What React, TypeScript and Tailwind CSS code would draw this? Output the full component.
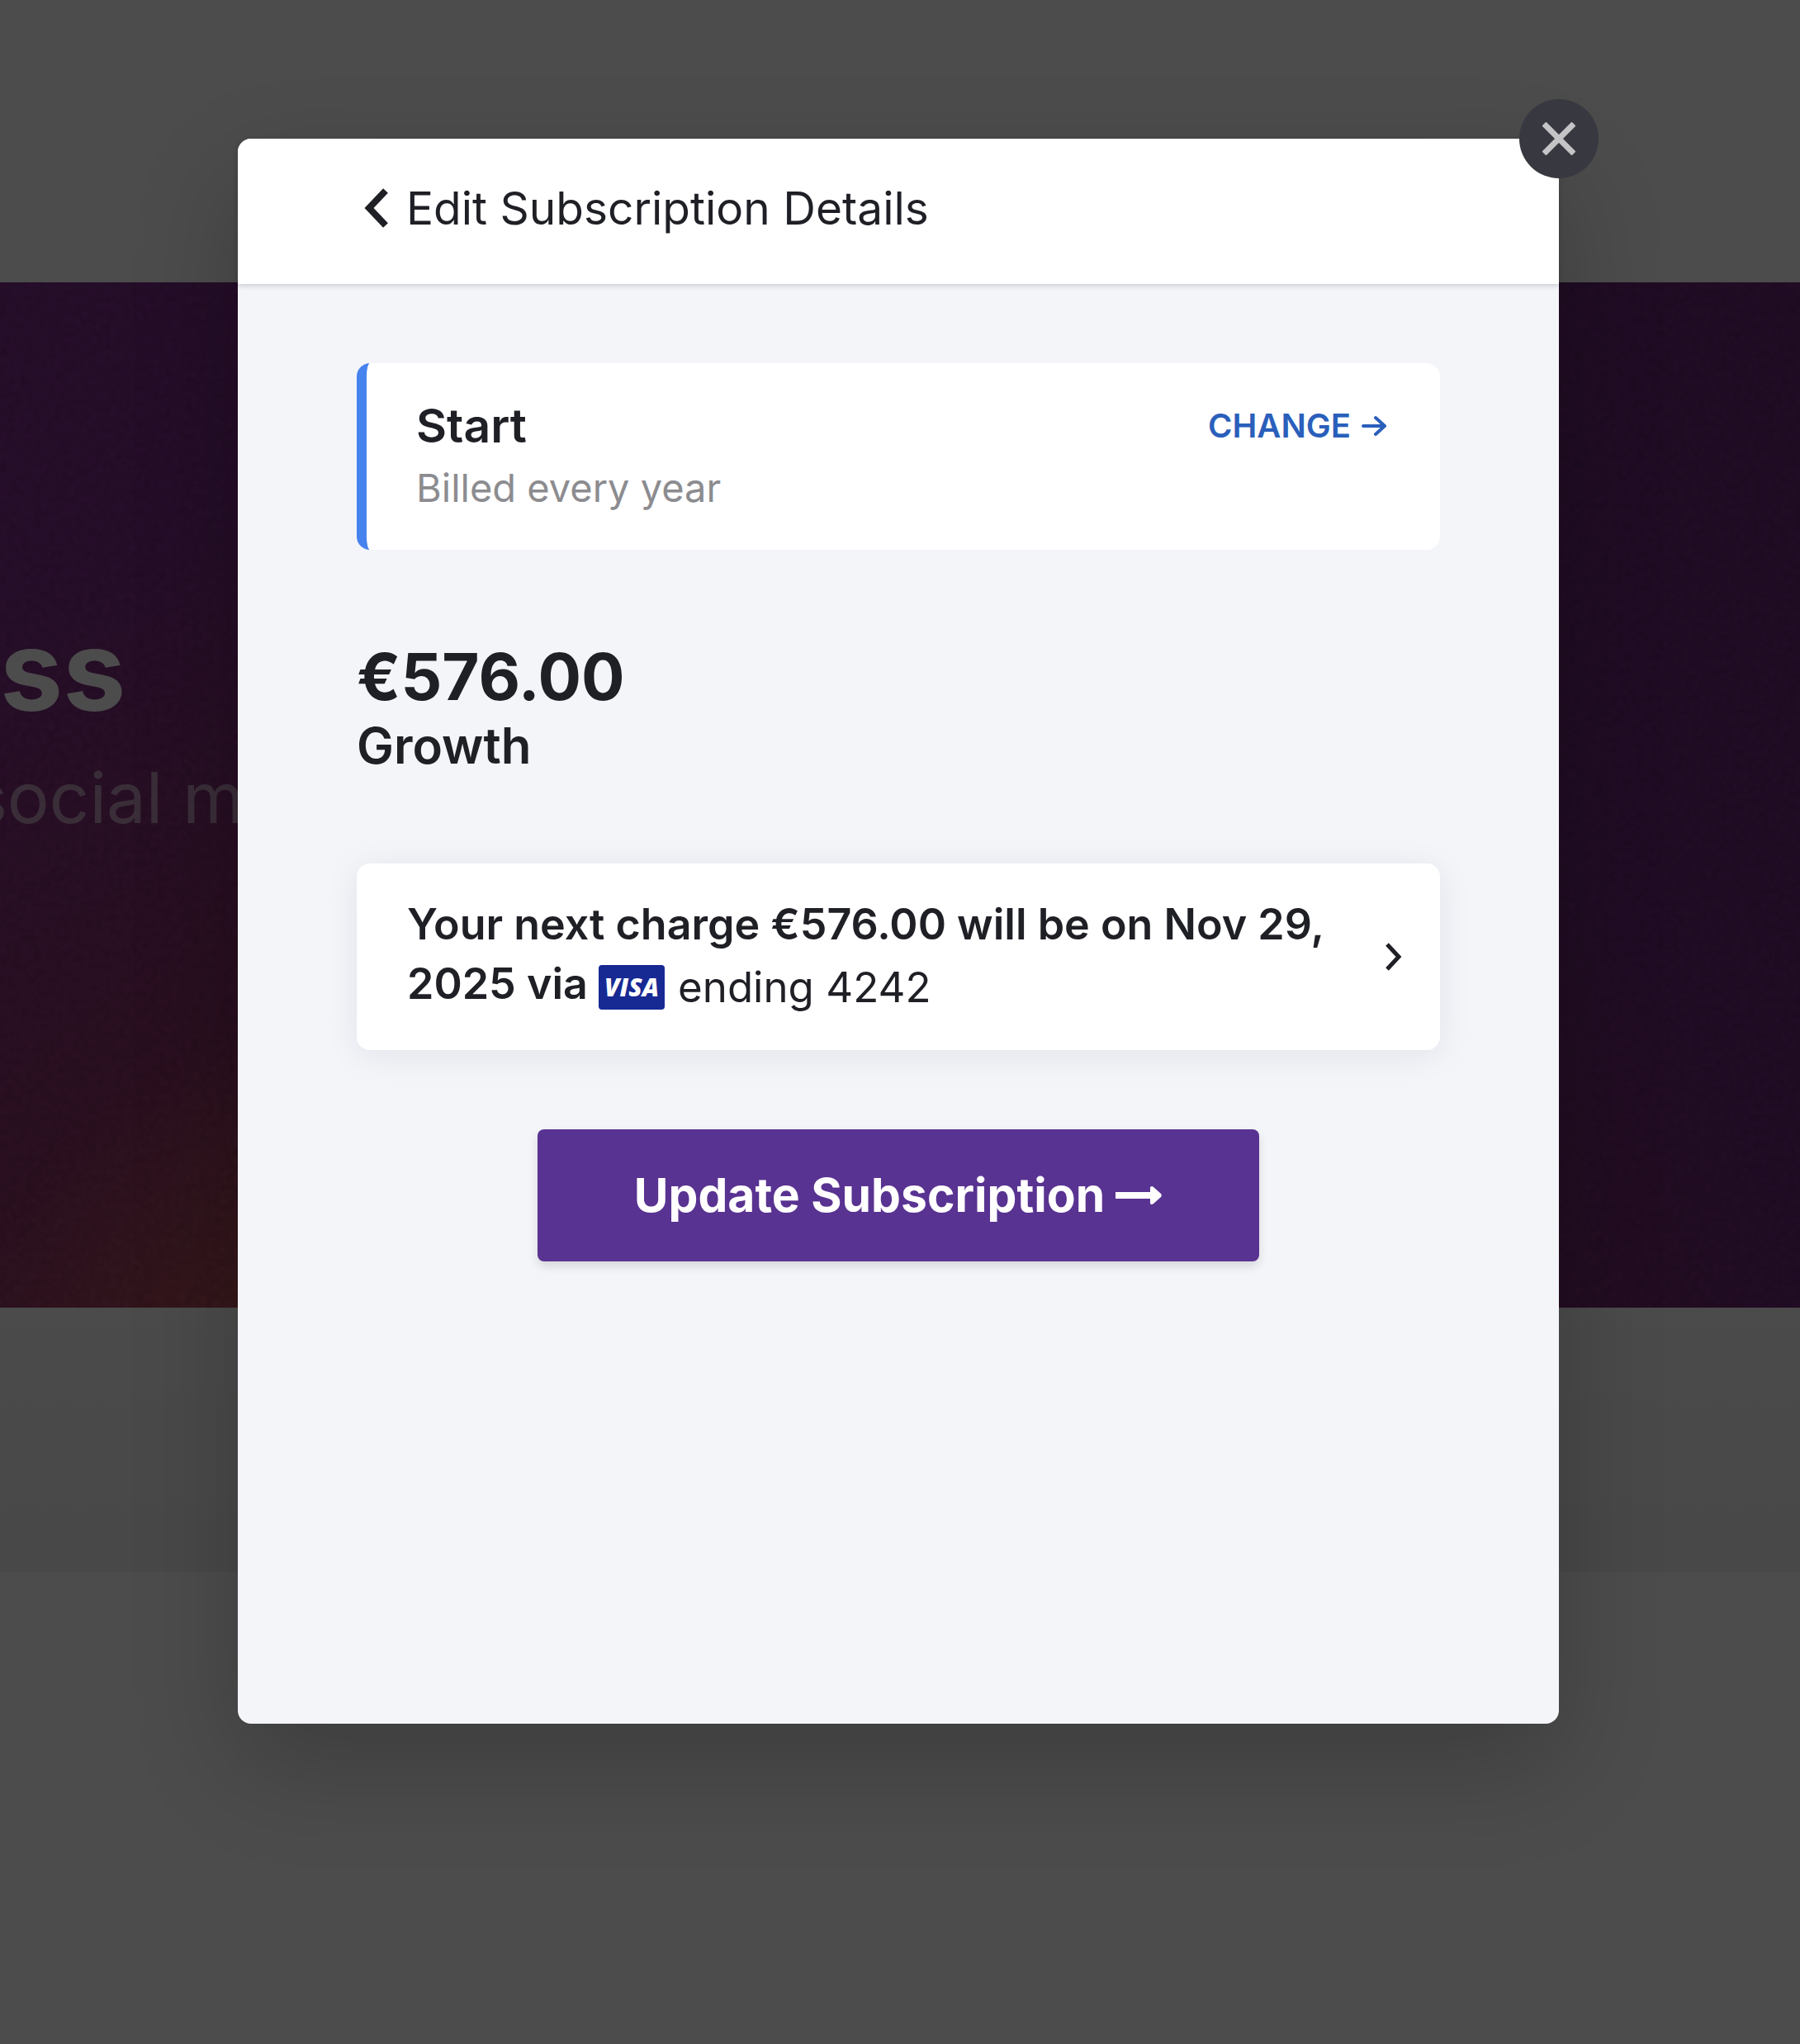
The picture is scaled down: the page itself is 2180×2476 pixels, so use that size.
import type { ReactNode } from 'react';

interface Plan {
  name: string;
  interval: string;
}

interface Charge {
  amount: string;
  product: string;
  date: string;
  last4: string;
}

const plan: Plan = { name: 'Start', interval: 'Billed every year' };
const charge: Charge = { amount: '€576.00', product: 'Growth', date: 'Nov 29, 2025', last4: '4242' };

function BackIcon() {
  return (
    <svg viewBox="0 0 48 48" className="size-12" fill="none" stroke="currentColor" strokeWidth="8" aria-hidden="true">
      <path d="M35 3 15 24l20 21" />
    </svg>
  );
}

function CloseIcon() {
  return (
    <svg viewBox="0 0 40 40" className="size-10" fill="none" stroke="currentColor" strokeWidth="7" aria-hidden="true">
      <path d="M2 2l36 36M38 2 2 38" />
    </svg>
  );
}

function ArrowIcon() {
  return (
    <svg
      viewBox="0 0 32 32"
      className="size-8"
      fill="none"
      stroke="currentColor"
      strokeWidth="4"
      strokeLinecap="round"
      strokeLinejoin="round"
      aria-hidden="true"
    >
      <path d="M3 16h26M18 6l11 10-11 10" />
    </svg>
  );
}

function ChevronIcon() {
  return (
    <svg viewBox="0 0 20 36" className="h-9 w-5 shrink-0" fill="none" stroke="currentColor" strokeWidth="5" aria-hidden="true">
      <path d="M2 3l14 15L2 33" />
    </svg>
  );
}

function LongArrowIcon() {
  return (
    <svg viewBox="0 0 58 24" className="h-6 w-[58px]" fill="currentColor" aria-hidden="true">
      <path d="M1 8h42V3c0-2 2-3 4-1l9 8c1 1 1 3 0 4l-9 8c-2 2-4 1-4-1v-5H1z" />
    </svg>
  );
}

function VisaBadge() {
  return (
    <span className="flex h-[54px] w-20 items-center justify-center rounded-sm bg-[#172993] font-['Open_Sans',sans-serif] text-[30px] leading-none font-extrabold text-white italic">
      VISA
    </span>
  );
}

function Hero() {
  return (
    <section className="relative h-[1242px] overflow-hidden bg-linear-to-r from-[#843290] to-[#702b7e]">
      <div className="absolute inset-0 bg-[radial-gradient(ellipse_70%_100%_at_32%_120%,#d06a58_0%,#c45a55e0_32%,#a03c5080_55%,#7e2d8600_100%)]" />
      <svg className="absolute inset-0 size-full opacity-15" aria-hidden="true">
        <filter id="grain">
          <feTurbulence type="fractalNoise" baseFrequency="0.12" numOctaves="3" />
          <feColorMatrix values="0 0 0 0 0  0 0 0 0 0  0 0 0 0 0  1 1 0 0 -0.6" />
        </filter>
        <rect width="100%" height="100%" filter="url(#grain)" />
      </svg>
      <div className="relative pt-[390px]">
        <h1 className="text-[136px] leading-[160px] font-bold text-white">ss</h1>
        <p className="-ml-9 text-[85px] leading-[150px] whitespace-nowrap text-white/50">social media</p>
      </div>
    </section>
  );
}

function Card({ className, children }: { className: string; children: ReactNode }) {
  return <div className={`flex w-full rounded-2xl bg-white ${className}`}>{children}</div>;
}

function SubscriptionModal() {
  return (
    <div
      role="dialog"
      aria-labelledby="modal-title"
      className="relative w-full max-w-[1600px] rounded-2xl bg-[#f4f5f9] text-[#1f2026] shadow-[0_50px_130px_rgba(0,0,0,0.2)]"
    >
      <button
        aria-label="Close"
        className="absolute -top-12 -right-12 flex size-24 items-center justify-center rounded-full bg-[#383841] text-[#c4c4c6]"
      >
        <CloseIcon />
      </button>

      <header className="rounded-t-2xl bg-white px-36 pt-11 pb-13 shadow-[0_2px_6px_rgba(30,30,60,0.2)]">
        <button className="flex items-center gap-3">
          <BackIcon />
          <h2 id="modal-title" className="text-[55px] leading-[80px]">
            Edit Subscription Details
          </h2>
        </button>
      </header>

      <div className="px-36 pt-24 pb-[560px]">
        <Card className="items-start justify-between border-l-12 border-[#4683ee] pt-9 pr-16 pb-10 pl-15">
          <div>
            <h3 className="text-[57px] leading-[80px] font-semibold">{plan.name}</h3>
            <p className="text-[47px] leading-[70px] text-[#8c8c90]">{plan.interval}</p>
          </div>
          <a href="#plans" className="flex items-center gap-3 text-[40px] leading-[80px] font-semibold text-[#2a5fbb]">
            CHANGE
            <ArrowIcon />
          </a>
        </Card>

        <div className="mt-[114px]">
          <p className="text-[78px] leading-[80px] font-bold">{charge.amount}</p>
          <p className="text-[60px] leading-[86px] font-semibold">{charge.product}</p>
        </div>

        <button className="mt-25 block w-full rounded-2xl text-left shadow-[0_6px_40px_rgba(20,20,50,0.08)]">
          <Card className="items-center justify-between pr-[46px] pl-[61px]">
            <p className="max-w-[1140px] pt-[38px] pb-11 text-[52px] leading-[72px] font-semibold">
              Your next charge {charge.amount} will be on {charge.date} via{' '}
              <span className="inline-flex items-center gap-4 align-middle text-[51px] leading-[54px] font-normal">
                <VisaBadge />
                ending {charge.last4}
              </span>
            </p>
            <ChevronIcon />
          </Card>
        </button>

        <button className="mx-auto mt-24 flex h-40 w-2/3 items-center justify-center gap-3 rounded-lg bg-[#593391] text-[57px] font-bold text-white shadow-[0_6px_12px_rgba(0,0,0,0.12)]">
          Update Subscription
          <LongArrowIcon />
        </button>
      </div>
    </div>
  );
}

export default function App() {
  return (
    <div className="relative min-h-screen overflow-hidden bg-white font-[Inter,sans-serif]">
      {/* Landing page behind the dialog */}
      <div className="h-[342px]" />
      <Hero />
      <div className="h-80 bg-linear-to-b from-[#fafafa] to-[#f0f0f0]" />

      <div className="absolute inset-0 flex items-start justify-center bg-black/70 pt-42 pr-1">
        <SubscriptionModal />
      </div>
    </div>
  );
}
